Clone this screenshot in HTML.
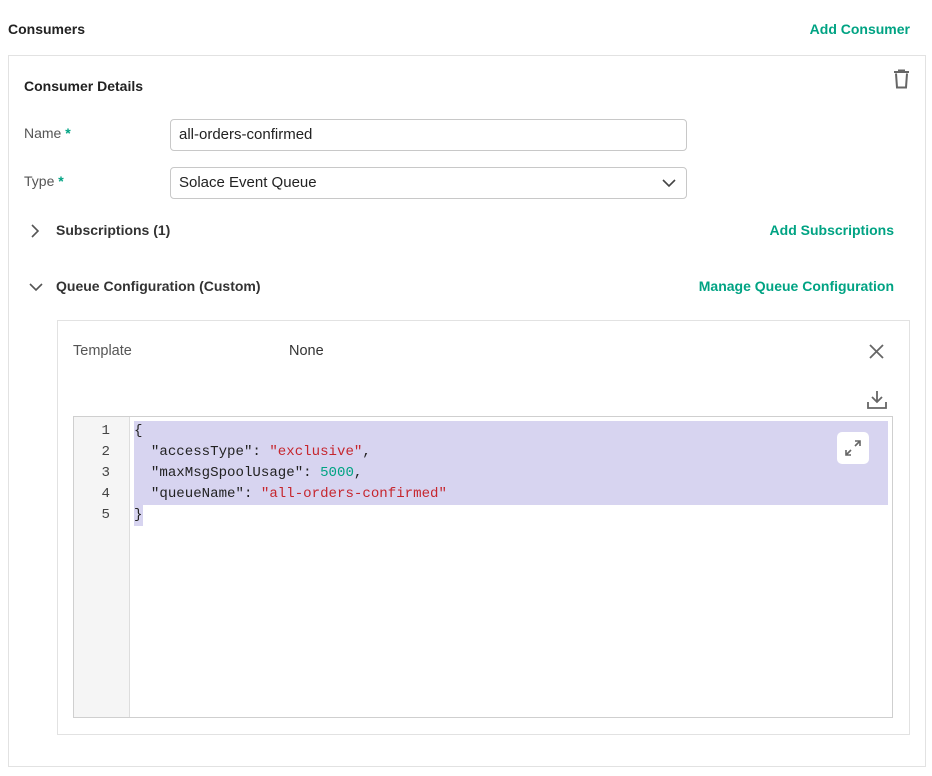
<!DOCTYPE html>
<html><head><style>
body{margin:0;background:#fff;font-family:"Liberation Sans",sans-serif;color:#222;width:932px;height:776px;position:relative;overflow:hidden}
.a{position:absolute}
.g{color:#00a383;font-weight:bold;font-size:14px}
.lbl{font-size:14px;color:#555}
.st{color:#00a383;font-weight:bold}
.inp{position:absolute;left:170px;width:517px;height:32px;border:1px solid #c8c8c8;border-radius:4px;box-sizing:border-box;font-size:15px;line-height:30px;padding-left:8px;color:#222}
.code{font-family:"Liberation Mono",monospace;font-size:14.1px;line-height:21px;white-space:pre}
.s{color:#c6262e}.n{color:#00a383}
</style></head><body>
<div class="a" style="left:8px;top:21px;font-weight:bold;font-size:14px">Consumers</div>
<div class="a g" style="right:22px;top:21px">Add Consumer</div>
<div class="a" style="left:8px;top:55px;width:918px;height:712px;border:1px solid #e2e2e2;box-sizing:border-box"></div>
<div class="a" style="left:24px;top:78px;font-weight:bold;font-size:14px">Consumer Details</div>
<svg class="a" style="left:892px;top:69px" width="19" height="20" viewBox="0 0 19 20"><path d="M2 3h15M7 3V1.5h5V3M4 4.5l1 14h9l1-14" fill="none" stroke="#666" stroke-width="2"/></svg>
<div class="a lbl" style="left:24px;top:125px">Name <span class="st">*</span></div>
<div class="inp" style="top:119px">all-orders-confirmed</div>
<div class="a lbl" style="left:24px;top:173px">Type <span class="st">*</span></div>
<div class="inp" style="top:167px">Solace Event Queue</div>
<svg class="a" style="left:662px;top:178px" width="14" height="10"><path d="M1 2l6 6 6-6" fill="none" stroke="#444" stroke-width="1.6"/></svg>
<svg class="a" style="left:30px;top:223px" width="10" height="16"><path d="M2 2l6 6-6 6" fill="none" stroke="#555" stroke-width="1.6"/></svg>
<div class="a" style="left:56px;top:222px;font-weight:bold;font-size:14px;color:#333">Subscriptions (1)</div>
<div class="a g" style="right:38px;top:222px">Add Subscriptions</div>
<svg class="a" style="left:28px;top:282px" width="16" height="10"><path d="M2 2l6 6 6-6" fill="none" stroke="#555" stroke-width="1.6"/></svg>
<div class="a" style="left:56px;top:278px;font-weight:bold;font-size:14px;color:#333">Queue Configuration (Custom)</div>
<div class="a g" style="right:38px;top:278px">Manage Queue Configuration</div>
<div class="a" style="left:57px;top:320px;width:853px;height:415px;border:1px solid #e2e2e2;box-sizing:border-box"></div>
<div class="a lbl" style="left:73px;top:343px;font-size:14.5px">Template</div>
<div class="a" style="left:289px;top:343px;font-size:14.5px;color:#333">None</div>
<svg class="a" style="left:869px;top:344px" width="15" height="15"><path d="M1 1l13 13M14 1L1 14" stroke="#666" stroke-width="1.8"/></svg>
<svg class="a" style="left:866px;top:390px" width="22" height="20"><path d="M11 1v11M6 7l5 5 5-5M2 12v6h18v-6" fill="none" stroke="#666" stroke-width="1.8"/></svg>
<div class="a" style="left:73px;top:416px;width:820px;height:302px;border:1px solid #cfcfcf;box-sizing:border-box"></div>
<div class="a" style="left:74px;top:417px;width:55px;height:300px;background:#f5f5f5;border-right:1px solid #ddd"></div>
<div class="a" style="left:134px;top:421px;width:754px;height:84px;background:#d7d4f0"></div>
<div class="a" style="left:134px;top:505px;width:9px;height:21px;background:#d7d4f0"></div>
<div class="a code" style="left:74px;top:421px;width:36px;text-align:right;color:#444">1
2
3
4
5</div>
<div class="a code" style="left:134px;top:421px;color:#222">{
  "accessType": <span class="s">"exclusive"</span>,
  "maxMsgSpoolUsage": <span class="n">5000</span>,
  "queueName": <span class="s">"all-orders-confirmed"</span>
}</div>
<div class="a" style="left:837px;top:432px;width:32px;height:32px;background:#fff;border-radius:5px"></div>
<svg class="a" style="left:843px;top:438px" width="20" height="20"><path d="M12 3h5v5M17 3l-5 5M3 12v5h5M3 17l5-5" fill="none" stroke="#666" stroke-width="1.6"/></svg>
</body></html>
